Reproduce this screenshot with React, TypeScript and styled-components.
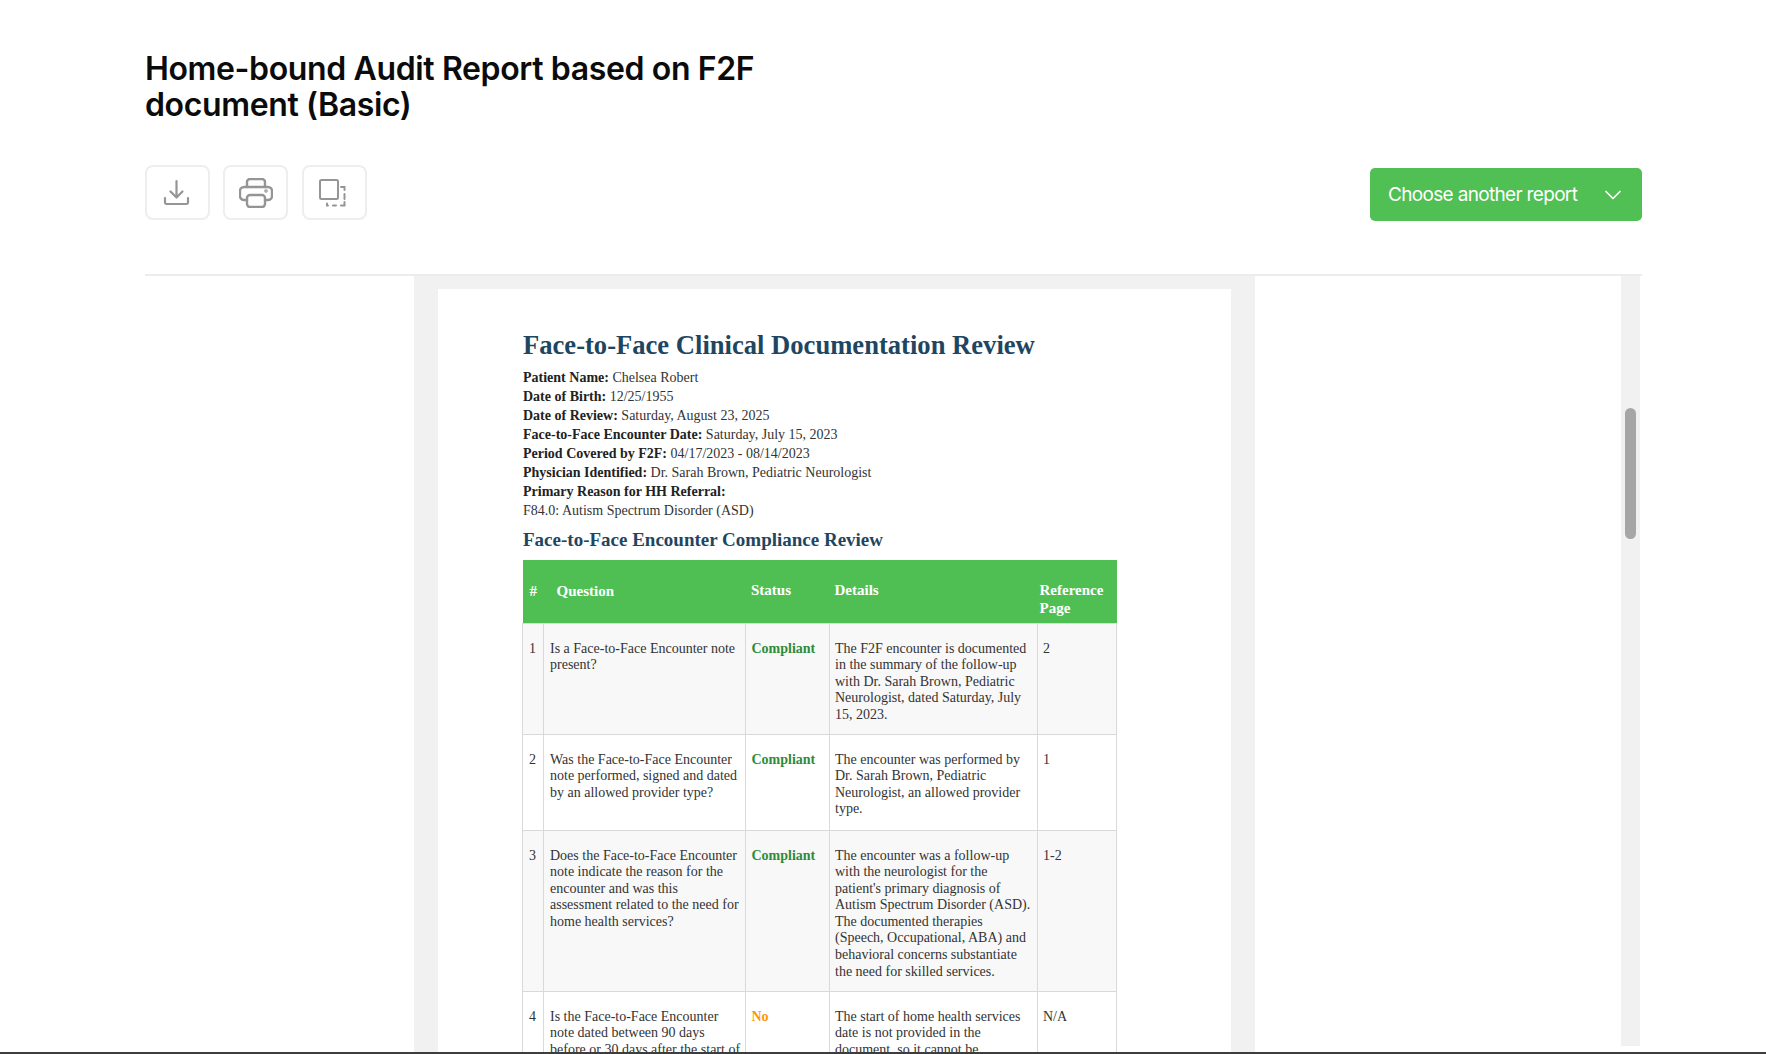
import React from "react";
import styled, { createGlobalStyle } from "styled-components";

const Global = createGlobalStyle`
  html, body { margin: 0; padding: 0; background: #fff; height: 100%; overflow: hidden; }
  * { box-sizing: border-box; }
`;

const Screen = styled.div`
  width: 1766px;
  height: 1054px;
  overflow: hidden;
  display: flex;
  flex-direction: column;
  background: #fff;
  border-bottom: 2px solid #3d3d3d;
`;
const Header = styled.header`
  flex: none;
  height: 274px;
  padding: 51px 124px 0 145px;
  display: flex;
  flex-direction: column;
`;
const Title = styled.h1`
  margin: 0;
  width: 640px;
  font-family: Inter, "Liberation Sans", sans-serif;
  font-weight: 600;
  font-size: 32px;
  line-height: 36px;
  letter-spacing: -0.37px;
  color: #0b0b0b;
`;
const Toolbar = styled.div`
  margin-top: 42px;
  display: flex;
  align-items: flex-start;
  justify-content: space-between;
`;
const IconGroup = styled.div`
  display: flex;
  gap: 13px;
`;
const IconButton = styled.button`
  width: 65px;
  height: 55px;
  padding: 0;
  border: 2px solid #eeeeee;
  border-radius: 8px;
  background: #fff;
  display: flex;
  align-items: center;
  justify-content: center;
  color: #959595;
  &:last-child { margin-left: 1px; }
`;
const SelectButton = styled.button`
  margin-top: 3px;
  width: 272px;
  height: 53px;
  padding: 0 21px 0 18px;
  border: 0;
  border-radius: 5px;
  background: #50bf54;
  color: #fff;
  display: flex;
  align-items: center;
  justify-content: space-between;
  font-family: Inter, "Liberation Sans", sans-serif;
  font-size: 19px;
  letter-spacing: -0.67px;
`;
const Body = styled.main`
  flex: 1;
  min-height: 0;
  margin: 0 124px 0 145px;
  border-top: 2px solid #ececec;
  display: flex;
`;
const LeftGap = styled.div`
  flex: none;
  width: 269px;
`;
const Viewer = styled.section`
  flex: none;
  width: 841px;
  background: #f1f1f1;
  padding: 13px 24px 0;
  overflow: hidden;
`;
const Page = styled.article`
  width: 793px;
  min-height: 900px;
  background: #fff;
  padding: 40px 0 0 85px;
  font-family: "Liberation Serif", "Times New Roman", serif;
  color: #333;
`;
const DocTitle = styled.h2`
  margin: 0;
  font-size: 26.6px;
  line-height: 32px;
  font-weight: 700;
  color: #1f4661;
`;
const Meta = styled.div`
  margin-top: 7px;
  font-size: 14px;
  line-height: 19px;
  color: #333;
  b { color: #222; }
`;
const SubTitle = styled.h3`
  margin: 8px 0 0;
  font-size: 19px;
  line-height: 24px;
  font-weight: 700;
  color: #1f4661;
`;
const Table = styled.table`
  margin: 8px 0 0 -1px;
  width: 594px;
  table-layout: fixed;
  border-collapse: collapse;
  font-size: 14px;
  line-height: 16.6px;
`;
const HeadRow = styled.tr`
  height: 63px;
  background: #4fbf53;
`;
const Th = styled.th<{ $left?: number; $top?: boolean }>`
  padding: ${(p) => (p.$top ? "21px 4px 0" : "0 4px")};
  padding-left: ${(p) => p.$left ?? 6}px;
  vertical-align: ${(p) => (p.$top ? "top" : "middle")};
  text-align: left;
  font-weight: 700;
  font-size: 15px;
  line-height: 18px;
  color: #fff;
`;
const Row = styled.tr<{ $h: number; $alt?: boolean }>`
  height: ${(p) => p.$h}px;
  background: ${(p) => (p.$alt ? "#f8f8f8" : "#fff")};
`;
const Td = styled.td<{ $left?: number; $right?: number }>`
  border: 1.5px solid #d9d9d9;
  padding: 17px ${(p) => p.$right ?? 2}px 8px ${(p) => p.$left ?? 6}px;
  vertical-align: top;
  color: #333;
`;
const Status = styled.b<{ $tone: "ok" | "no" }>`
  color: ${(p) => (p.$tone === "ok" ? "#2e8b3a" : "#ff9800")};
`;
const RightGap = styled.div`
  flex: none;
  width: 366px;
`;
const Track = styled.div`
  flex: none;
  width: 19px;
  margin-bottom: 6px;
  background: #f1f1f1;
  padding: 132px 4px 0;
`;
const Thumb = styled.div`
  width: 11px;
  height: 131px;
  border-radius: 6px;
  background: #a6a6a6;
`;

const DownloadIcon = () => (
  <svg width="29" height="27" viewBox="0 0 29 27" fill="none" stroke="currentColor" strokeWidth="2.2" strokeLinecap="round" strokeLinejoin="round">
    <path d="M13.5 2v16M7.5 12.5l6 6 6-6" />
    <path d="M2 19v4.5a1.5 1.5 0 0 0 1.5 1.5h20a1.5 1.5 0 0 0 1.5-1.5V19" />
  </svg>
);
const PrintIcon = () => (
  <svg width="34" height="30" viewBox="0 0 34 30" fill="none" stroke="currentColor" strokeWidth="2.4" strokeLinecap="round" strokeLinejoin="round">
    <path d="M8 9V4a3 3 0 0 1 3-3h12a3 3 0 0 1 3 3v5" />
    <path d="M8 22H5a4 4 0 0 1-4-4v-5a4 4 0 0 1 4-4h24a4 4 0 0 1 4 4v5a4 4 0 0 1-4 4h-3" />
    <rect x="8" y="17" width="18" height="12" rx="3" />
    <circle cx="27" cy="13" r="0.6" />
  </svg>
);
const ResizeIcon = () => (
  <svg width="32" height="28" viewBox="0 0 32 28" fill="none" stroke="currentColor" strokeWidth="2">
    <rect x="1" y="1" width="18" height="19" rx="1.5" />
    <path d="M22 8h3.5v3M25.5 15v5M25.5 23v3.5H22M17 26.5h-3M9 26.5H8v-2" strokeLinecap="round" />
  </svg>
);
const Chevron = () => (
  <svg width="16" height="10" viewBox="0 0 16 10" fill="none" stroke="#fff" strokeWidth="1.7" strokeLinecap="round" strokeLinejoin="round">
    <path d="M1 1.5l7 7 7-7" />
  </svg>
);

const meta: [string, string][] = [
  ["Patient Name:", "Chelsea Robert"],
  ["Date of Birth:", "12/25/1955"],
  ["Date of Review:", "Saturday, August 23, 2025"],
  ["Face-to-Face Encounter Date:", "Saturday, July 15, 2023"],
  ["Period Covered by F2F:", "04/17/2023 - 08/14/2023"],
  ["Physician Identified:", "Dr. Sarah Brown, Pediatric Neurologist"],
];

const rows = [
  { n: 1, h: 111, q: "Is a Face-to-Face Encounter note present?", s: "Compliant", d: "The F2F encounter is documented in the summary of the follow-up with Dr. Sarah Brown, Pediatric Neurologist, dated Saturday, July 15, 2023.", r: "2" },
  { n: 2, h: 96, q: "Was the Face-to-Face Encounter note performed, signed and dated by an allowed provider type?", s: "Compliant", d: "The encounter was performed by Dr. Sarah Brown, Pediatric Neurologist, an allowed provider type.", r: "1" },
  { n: 3, h: 161, q: "Does the Face-to-Face Encounter note indicate the reason for the encounter and was this assessment related to the need for home health services?", s: "Compliant", d: "The encounter was a follow-up with the neurologist for the patient's primary diagnosis of Autism Spectrum Disorder (ASD). The documented therapies (Speech, Occupational, ABA) and behavioral concerns substantiate the need for skilled services.", r: "1-2" },
  { n: 4, h: 120, q: "Is the Face-to-Face Encounter note dated between 90 days before or 30 days after the start of home health services?", s: "No", d: "The start of home health services date is not provided in the document, so it cannot be determined.", r: "N/A" },
];

export default function App() {
  return (
    <>
      <Global />
      <Screen>
        <Header>
          <Title>Home-bound Audit Report based on F2F document (Basic)</Title>
          <Toolbar>
            <IconGroup>
              <IconButton aria-label="Download"><DownloadIcon /></IconButton>
              <IconButton aria-label="Print"><PrintIcon /></IconButton>
              <IconButton aria-label="Resize"><ResizeIcon /></IconButton>
            </IconGroup>
            <SelectButton>
              Choose another report
              <Chevron />
            </SelectButton>
          </Toolbar>
        </Header>
        <Body>
          <LeftGap />
          <Viewer>
            <Page>
              <DocTitle>Face-to-Face Clinical Documentation Review</DocTitle>
              <Meta>
                {meta.map(([k, v]) => (
                  <div key={k}><b>{k}</b> {v}</div>
                ))}
                <div><b>Primary Reason for HH Referral:</b></div>
                <div>F84.0: Autism Spectrum Disorder (ASD)</div>
              </Meta>
              <SubTitle>Face-to-Face Encounter Compliance Review</SubTitle>
              <Table>
                <colgroup>
                  <col width={21} />
                  <col width={202} />
                  <col width={84} />
                  <col width={208} />
                  <col width={79} />
                </colgroup>
                <thead>
                  <HeadRow>
                    <Th $left={7}>#</Th>
                    <Th $left={13}>Question</Th>
                    <Th $top $left={5.5}>Status</Th>
                    <Th $top $left={5}>Details</Th>
                    <Th $top $left={2}>Reference Page</Th>
                  </HeadRow>
                </thead>
                <tbody>
                  {rows.map((r) => (
                    <Row key={r.n} $h={r.h} $alt={r.n % 2 === 1}>
                      <Td>{r.n}</Td>
                      <Td>{r.q}</Td>
                      <Td $left={5.5}><Status $tone={r.s === "No" ? "no" : "ok"}>{r.s}</Status></Td>
                      <Td $left={5} $right={3.5}>{r.d}</Td>
                      <Td $left={5}>{r.r}</Td>
                    </Row>
                  ))}
                </tbody>
              </Table>
            </Page>
          </Viewer>
          <RightGap />
          <Track><Thumb /></Track>
        </Body>
      </Screen>
    </>
  );
}
